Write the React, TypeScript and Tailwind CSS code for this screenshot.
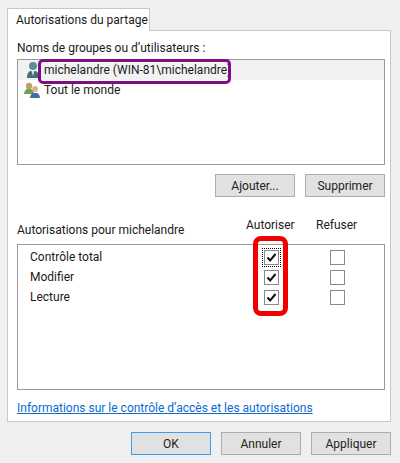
import React from 'react';

function UserIcon() {
  return (
    <svg width="16" height="18" viewBox="0 0 16 18" className="shrink-0">
      <circle cx="8" cy="5" r="4" fill="#5a8f96" />
      <path d="M2 17c0-5 2-7 4-7h4c2 0 4 2 4 7z" fill="#3f6f78" />
      <path d="M6.500 10h3L8 15z" fill="#cfe3e6" />
    </svg>
  );
}

function GroupIcon() {
  return (
    <svg width="18" height="16" viewBox="0 0 18 16" className="shrink-0">
      <circle cx="6" cy="4" r="3.200" fill="#b9a36a" />
      <path d="M1 12c0-3 2-5 3.500-5h3C9 7 11 9 11 12z" fill="#6fa24f" />
      <circle cx="12" cy="7" r="3" fill="#d9b48c" />
      <path d="M7 16c0-3 2-5 3.500-5h3c1.500 0 3.500 2 3.500 5z" fill="#3f6fa8" />
    </svg>
  );
}

function Check({ checked, focused }: { checked?: boolean; focused?: boolean }) {
  return (
    <div className={`w-[17px] h-[17px] flex items-center justify-center ${focused ? 'outline-1 outline-dotted outline-black' : ''}`}>
      <div className="w-[15px] h-[15px] bg-white border border-[#8a8a8a] flex items-center justify-center">
        {checked && (
          <svg width="11" height="11" viewBox="0 0 11 11">
            <path d="M1.500 5.500 4.200 8.500 9.500 2" fill="none" stroke="#111" strokeWidth="2" />
          </svg>
        )}
      </div>
    </div>
  );
}

function Btn({ label, primary }: { label: string; primary?: boolean }) {
  return (
    <button className={`w-[80px] h-[23px] bg-[#e1e1e1] border text-[12px] text-[#222] flex items-center justify-center ${primary ? 'border-[#3c9cf0]' : 'border-[#adadad]'}`}>
      {label}
    </button>
  );
}

export default function App() {
  const perms = [
    { name: 'Contrôle total', focused: true },
    { name: 'Modifier' },
    { name: 'Lecture' },
  ];

  return (
    <div className="w-[400px] h-[463px] bg-[#f0f0f0] pt-2 pl-[7px] text-[12px] text-[#1a1a1a] overflow-hidden font-['Roboto',sans-serif]">
      <div className="w-[143px] h-[23px] bg-white border border-b-0 border-[#c8c8c8] pl-2 flex items-center relative z-10 whitespace-nowrap">
        Autorisations du partage
      </div>
      <div className="w-[384px] h-[392px] bg-white border border-[#c8c8c8] -mt-px pt-[7px] px-[9px]">
        <div className="h-[20px] flex items-center">Noms de groupes ou d’utilisateurs :</div>
        <div className="relative w-[368px] h-[106px] border border-[#9a9a9a] mt-px">
          <div className="h-[20px] bg-[#f2f2f2] flex items-center pl-[7px] gap-[3px]">
            <UserIcon />
            <span>michelandre (WIN-81\michelandre)</span>
          </div>
          <div className="h-[20px] flex items-center pl-[5px] gap-[3px]">
            <GroupIcon />
            <span>Tout le monde</span>
          </div>
          <div className="absolute left-[20px] -top-px w-[193px] h-[25px] border-[3px] border-[#7d0f82] rounded-[5px]" />
        </div>

        <div className="flex justify-end gap-[10px] mt-[9px] w-[368px]">
          <Btn label="Ajouter..." />
          <Btn label="Supprimer" />
        </div>

        <div className="flex w-[368px] mt-[20px] h-[27px] items-start">
          <span className="mt-[4px] flex-1">Autorisations pour michelandre</span>
          <span className="w-[45px] -mt-[1px]">Autoriser</span>
          <span className="w-[41px] ml-[25px] mr-[28px] -mt-[1px]">Refuser</span>
        </div>

        <div className="relative w-[368px] h-[146px] border border-[#9a9a9a] pt-[2px]">
          {perms.map((p) => (
            <div key={p.name} className="h-[20px] flex items-center pl-[12px]">
              <span className="w-[233px]">{p.name}</span>
              <Check checked focused={p.focused} />
              <div className="w-[49px]" />
              <Check />
            </div>
          ))}
          <div className="absolute left-[235px] -top-[9px] w-[35px] h-[80px] border-[5px] border-[#f00000] rounded-[8px]" />
        </div>

        <a className="block mt-[9px] text-[#0a6cd0] underline">Informations sur le contrôle d’accès et les autorisations</a>
      </div>
      <div className="flex justify-end gap-[10px] w-[384px] mt-[10px]">
        <Btn label="OK" primary />
        <Btn label="Annuler" />
        <Btn label="Appliquer" />
      </div>
    </div>
  );
}
